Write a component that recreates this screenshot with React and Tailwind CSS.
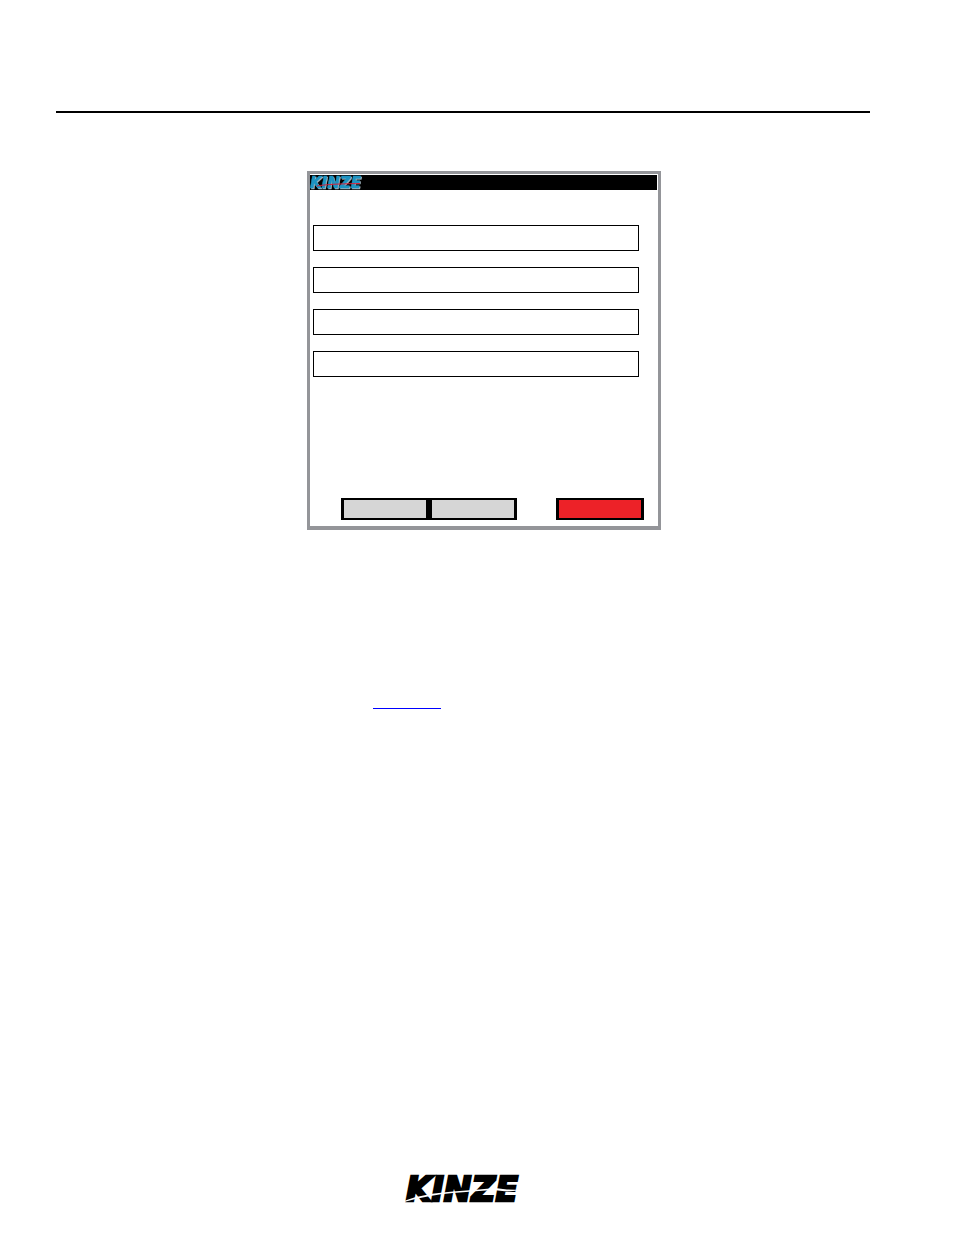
import React from 'react';

const FIELDS = ['Field 1', 'Field 2', 'Field 3', 'Field 4'];

function FooterLogo() {
  return (
    <svg className="w-[120px] h-[42px] overflow-visible" viewBox="0 0 120 42" role="img" aria-label="Kinze">
      <text
        x="3"
        y="32"
        fontFamily="'DejaVu Sans', sans-serif"
        fontSize="33"
        fontWeight="700"
        fontStyle="italic"
        fill="#000"
        stroke="#000"
        strokeWidth="2.4"
      >
        KINZE
      </text>
      {/* swoosh */}
      <path d="M1 32 C14 27 30 24 50 22.500 L76 20.500 L92 19 L104 20.500 L120 21 L104 22.500 L90 21 L76 22 L50 24 C34 25.500 18 28 1 33Z" fill="#fff" />
    </svg>
  );
}

function HeaderLogo() {
  return (
    <svg className="w-[58px] h-[15px] overflow-visible" viewBox="0 0 58 15" role="img" aria-label="Kinze">
      <text
        x="0"
        y="13"
        fontFamily="'DejaVu Sans', sans-serif"
        fontSize="15"
        fontWeight="700"
        fontStyle="italic"
        fill="#1c93c2"
        stroke="#1c93c2"
        strokeWidth="0.5"
        className="drop-shadow-[1px_1px_0_#9fb4bf]"
      >
        KINZE
      </text>
      <path d="M7 11 C16 9.500 24 9 50 8.500" fill="none" stroke="#d8203a" strokeWidth="1" />
    </svg>
  );
}

function KeyButton({ label, className }) {
  return (
    <button
      type="button"
      aria-label={label}
      className={`w-[88px] h-[22px] border-x-[3px] border-y-2 border-black ${className}`}
    />
  );
}

export default function App() {
  return (
    <div className="min-h-screen bg-white flex flex-col pt-[111px] pb-6 pl-14 pr-[84px] font-['Liberation_Sans',sans-serif]">
      <hr className="border-0 h-[2px] bg-black" />

      <main className="pt-[58px]">
        {/* Monitor screen */}
        <section className="ml-[251px] w-full max-w-[354px] border-[3px] border-b-4 border-[#949599] pt-px">
          <header className="bg-black mr-px h-[15px] flex items-center">
            <HeaderLogo />
          </header>

          <div className="flex flex-col gap-4 pt-[35px] pl-[3px] pr-[19px]">
            {FIELDS.map((name) => (
              <input
                key={name}
                type="text"
                aria-label={name}
                className="w-full h-[26px] px-1 text-sm bg-white border border-black"
              />
            ))}
          </div>

          <div className="flex pt-[121px] pb-[6px] pl-[31px]">
            <KeyButton label="Left key" className="bg-[#d6d6d6]" />
            <KeyButton label="Middle key" className="bg-[#d6d6d6]" />
            <KeyButton label="Right key" className="bg-[#ed2228] ml-[39px]" />
          </div>
        </section>

        {/* Cross reference */}
        <a href="#reference" aria-label="Reference" className="block mt-[162px] ml-[317px] w-[68px] h-[17px] border-b border-[#0000ff]" />
      </main>

      <footer className="mt-auto flex justify-center">
        <FooterLogo />
      </footer>
    </div>
  );
}
